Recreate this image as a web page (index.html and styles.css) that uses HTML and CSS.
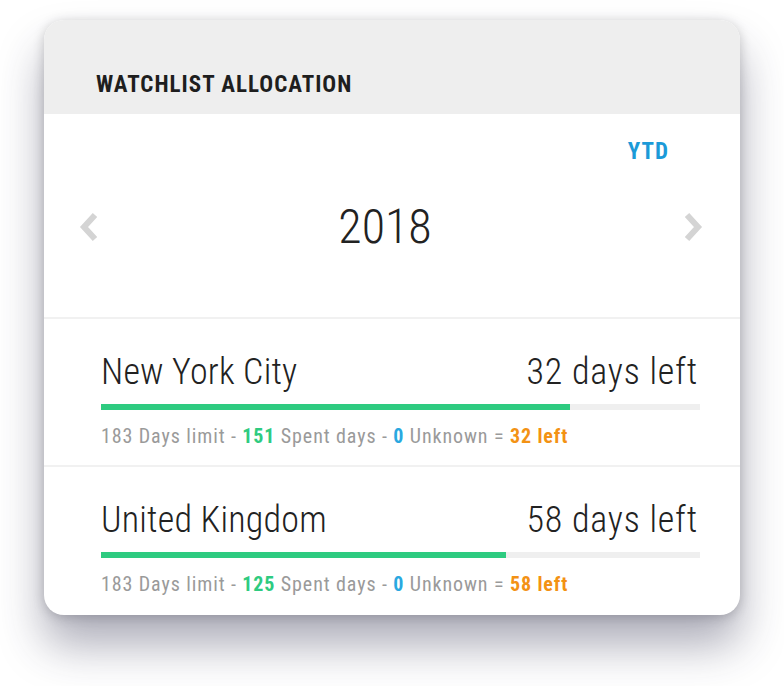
FILE: index.html
```html
<!DOCTYPE html>
<html>
<head>
<meta charset="utf-8">
<link rel="stylesheet" href="styles.css">
</head>
<body>
<div class="card">
  <div class="header"><span class="title">WATCHLIST ALLOCATION</span></div>
  <div class="year-section">
    <div class="ytd-row"><span class="ytd">YTD</span></div>
    <div class="year-row">
      <svg class="chev" width="22" height="30" viewBox="0 0 22 30"><path d="M17 3 L6 15 L17 27" fill="none" stroke="#d4d4d4" stroke-width="6" stroke-linejoin="miter"/></svg>
      <span class="year">2018</span>
      <svg class="chev" width="22" height="30" viewBox="0 0 22 30"><path d="M5 3 L16 15 L5 27" fill="none" stroke="#d4d4d4" stroke-width="6" stroke-linejoin="miter"/></svg>
    </div>
  </div>
  <div class="row">
    <div class="row-top"><span class="place">New York City</span><span class="left">32 days left</span></div>
    <div class="bar"><div class="fill" style="width:78.3%"></div></div>
    <div class="detail">183 Days limit - <b class="g">151</b> Spent days - <b class="b">0</b> Unknown = <b class="o">32 left</b></div>
  </div>
  <div class="row last">
    <div class="row-top"><span class="place">United Kingdom</span><span class="left">58 days left</span></div>
    <div class="bar"><div class="fill" style="width:67.6%"></div></div>
    <div class="detail">183 Days limit - <b class="g">125</b> Spent days - <b class="b">0</b> Unknown = <b class="o">58 left</b></div>
  </div>
</div>
</body>
</html>
```
FILE: styles.css
```css
html, body { margin: 0; padding: 0; background: #fff; }
body {
  padding: 20px 44px;
  min-height: 686px;
  box-sizing: border-box;
  font-family: Roboto, "Liberation Sans", sans-serif;
}
.card {
  width: 696px;
  height: 595px;
  background: #fff;
  border-radius: 20px;
  overflow: hidden;
  box-shadow: 0 30px 45px rgba(40, 40, 70, 0.38), 0 2px 12px rgba(0,0,0,0.2);
  display: flex;
  flex-direction: column;
}
.header {
  height: 94px;
  background: #eeeeee;
  display: flex;
  align-items: flex-end;
  padding-left: 52px;
  box-sizing: border-box;
  padding-bottom: 18px;
}
.title {
  font-family: "Roboto Condensed", "Liberation Sans Narrow", "Liberation Sans", sans-serif;
  font-weight: bold;
  font-size: 23px;
  color: #1e1e1e;
  letter-spacing: 1px;
  line-height: 1;
}
.year-section {
  height: 206px;
  border-bottom: 2px solid #f1f1f1;
  box-sizing: border-box;
  padding: 27px 36px 0 34px;
}
.ytd-row { display: flex; justify-content: flex-end; padding-right: 36px; }
.ytd {
  font-family: "Roboto Condensed", "Liberation Sans Narrow", "Liberation Sans", sans-serif;
  font-weight: bold;
  font-size: 23px;
  letter-spacing: 1px;
  margin-right: -1px;
  color: #1b9ad8;
  line-height: 22px;
}
.year-row {
  display: flex;
  justify-content: space-between;
  align-items: center;
  margin-top: 40px;
}
.year {
  font-family: "Roboto Condensed", Roboto, sans-serif;
  font-weight: 300;
  font-size: 48px;
  color: #222;
  line-height: 48px;
  margin-right: 12px;
}
.row {
  height: 148px;
  border-bottom: 2px solid #f1f1f1;
  box-sizing: border-box;
  padding: 33px 43px 0 57px;
}
.row.last { border-bottom: none; }
.row-top {
  display: flex;
  justify-content: space-between;
  align-items: baseline;
  font-family: "Roboto Condensed", Roboto, sans-serif;
  font-weight: 300;
  font-size: 36px;
  color: #222;
  line-height: 40px;
}
.place { letter-spacing: 0.2px; }
.left { letter-spacing: 0.8px; margin-right: -1px; }
.bar {
  margin: 12px -3px 0 0;
  height: 6px;
  background: #efefef;
}
.fill { height: 100%; background: #2ecb80; }
.detail {
  margin-top: 15px;
  font-family: "Roboto Condensed", Roboto, sans-serif;
  font-size: 20px;
  letter-spacing: 0.9px;
  color: #9a9a9a;
  line-height: 22px;
}
.detail b { font-weight: 700; }
.g { color: #2ecb80; }
.b { color: #29a8e0; }
.o { color: #f39214; }
```
